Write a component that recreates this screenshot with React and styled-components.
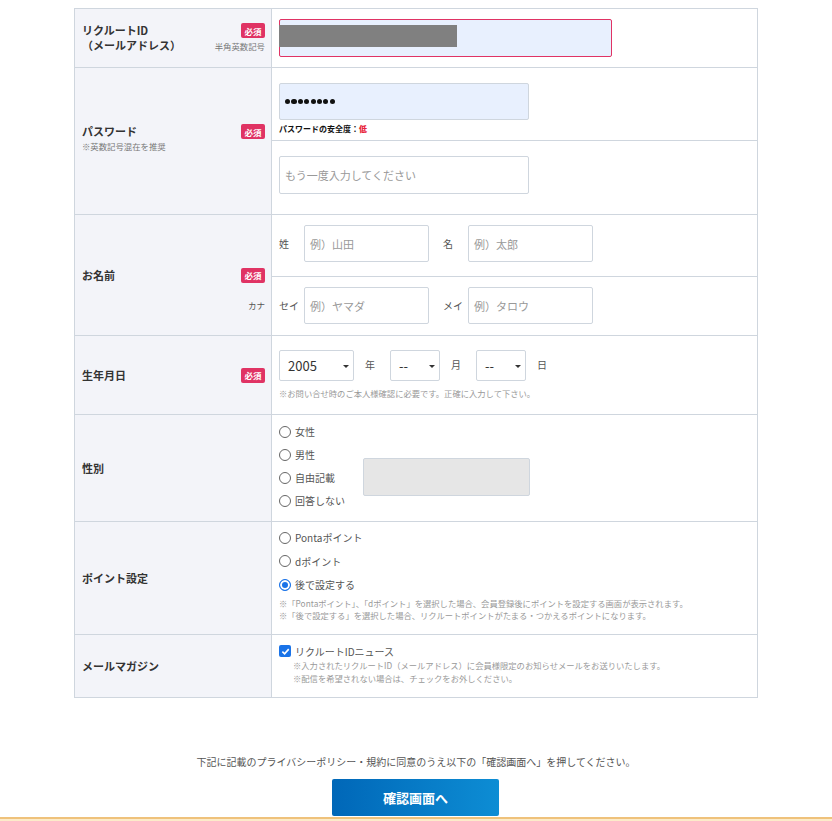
import React from "react";
import styled, { createGlobalStyle } from "styled-components";

const GlobalStyle = createGlobalStyle`
  body {
    margin: 0;
    background: #fff;
    font-family: "Noto Sans CJK JP", "Noto Sans", sans-serif;
    color: #333;
  }
`;

const Page = styled.div`
  padding-top: 8px;
`;

const Table = styled.div`
  width: 682px;
  margin-left: 74px;
  border: 1px solid #cfd6de;
  border-bottom: none;
`;

const Row = styled.div`
  display: grid;
  grid-template-columns: 197px 1fr;
  height: ${(p) => p.h}px;
  border-bottom: 1px solid #cfd6de;
`;

const LabelCell = styled.div`
  display: flex;
  align-items: center;
  padding: 0 6px ${(p) => p.pb || 0}px 7px;
  background: #f3f4f9;
  border-right: 1px solid #cfd6de;
`;

const LabelStack = styled.div`
  display: grid;
  grid-template-rows: 1fr auto 1fr;
  padding: 0 6px 0 7px;
  background: #f3f4f9;
  border-right: 1px solid #cfd6de;
`;

const LabelInner = styled.div`
  flex: 1;
  display: flex;
  justify-content: space-between;
  align-items: flex-start;
`;

const Title = styled.div`
  font-size: 11px;
  font-weight: bold;
  line-height: 15px;
  color: #333;
`;

const LabelNote = styled.div`
  font-size: 8.4px;
  line-height: 15px;
  color: #777;
`;

const Side = styled.div`
  display: flex;
  flex-direction: column;
  align-items: flex-end;
`;

const Badge = styled.span`
  display: inline-flex;
  align-items: center;
  justify-content: center;
  width: 24px;
  height: 15px;
  border-radius: 2px;
  background: #e03364;
  color: #fff;
  font-size: 8.5px;
  font-weight: bold;
`;

const SideNote = styled.div`
  margin-top: 2px;
  font-size: 8.4px;
  line-height: 12px;
  color: #777;
`;

const Kana = styled.div`
  align-self: center;
  justify-self: end;
  padding-bottom: 8px;
  font-size: 8.5px;
  color: #555;
`;

const FieldCell = styled.div`
  display: flex;
  flex-direction: column;
`;

const Sub = styled.div`
  height: ${(p) => p.h}px;
  padding: ${(p) => p.pt || 0}px 7px 0 7px;
  box-sizing: border-box;
  display: flex;
  flex-direction: column;
  justify-content: ${(p) => (p.center ? "center" : "flex-start")};
  & + & {
    border-top: 1px solid #cfd6de;
  }
`;

const TextBox = styled.div`
  box-sizing: border-box;
  width: ${(p) => p.w}px;
  height: ${(p) => p.ht || 38}px;
  border: 1px solid ${(p) => (p.error ? "#e03364" : "#cfd6de")};
  border-radius: 2px;
  background: ${(p) => p.bg || "#fff"};
  display: flex;
  align-items: center;
  padding-left: 5px;
  font-size: 11px;
  color: #999;
`;

const Redact = styled.span`
  align-self: flex-start;
  margin: 5px 0 0 -6px;
  width: 178px;
  height: 22px;
  background: #808080;
`;

const Dots = styled.span`
  display: flex;
  gap: 1.2px;
  & > i {
    width: 5.2px;
    height: 5.2px;
    border-radius: 50%;
    background: #111;
  }
`;

const Strength = styled.div`
  margin-top: 3px;
  font-size: 8px;
  font-weight: bold;
  line-height: 12px;
  color: #111;
  & b {
    color: #e8263c;
  }
`;

const Line = styled.div`
  display: flex;
  align-items: center;
`;

const UnitLabel = styled.span`
  width: ${(p) => p.w}px;
  font-size: ${(p) => p.fs || 11}px;
  color: #555;
  margin-left: ${(p) => p.ml || 0}px;
  margin-top: ${(p) => p.mt || 0}px;
`;

const SelectBox = styled.div`
  position: relative;
  box-sizing: border-box;
  width: ${(p) => p.w}px;
  height: 31px;
  border: 1px solid #cfd6de;
  border-radius: 2px;
  display: flex;
  align-items: center;
  padding-left: 8px;
  font-size: 13px;
  color: #333;
  &::after {
    content: "";
    position: absolute;
    right: 4px;
    top: 14px;
    border-left: 3px solid transparent;
    border-right: 3px solid transparent;
    border-top: 3.5px solid #333;
  }
`;

const Note = styled.div`
  font-size: 8.3px;
  line-height: ${(p) => p.lh || 12}px;
  color: #999;
  padding-left: ${(p) => p.pl || 0}px;
  margin-top: ${(p) => p.mt || 0}px;
  white-space: nowrap;
`;

const Choice = styled.label`
  display: flex;
  align-items: center;
  height: ${(p) => p.lh || 23}px;
  font-size: 10px;
  color: #555;
`;

const Radio = styled.span`
  box-sizing: border-box;
  width: 12px;
  height: 12px;
  margin-right: 4px;
  border-radius: 50%;
  border: 1px solid ${(p) => (p.on ? "#1a73e8" : "#666")};
  background: ${(p) => (p.on ? "#1a73e8" : "#fff")};
  box-shadow: ${(p) => (p.on ? "inset 0 0 0 2px #fff" : "none")};
`;

const Check = styled.span`
  display: inline-flex;
  align-items: center;
  justify-content: center;
  width: 12px;
  height: 12px;
  margin-right: 4px;
  border-radius: 2px;
  background: #1a73e8;
`;

const FreeBox = styled.span`
  box-sizing: border-box;
  width: 167px;
  height: 38px;
  margin: -8px 0 -7px 28px;
  border: 1px solid #cfd6de;
  border-radius: 2px;
  background: #e6e6e6;
`;

const Agree = styled.p`
  margin: 56px 0 0;
  text-align: center;
  font-size: 10px;
  line-height: 15px;
  color: #555;
`;

const Submit = styled.button`
  display: block;
  margin: 10px 0 0 332px;
  width: 167px;
  height: 37px;
  border: none;
  border-radius: 2px;
  background: linear-gradient(90deg, #0067b8 0%, #0d8dd4 100%);
  color: #fff;
  font-family: inherit;
  font-size: 13px;
  font-weight: bold;
`;

const Footer = styled.div`
  margin-top: 1px;
  height: 10px;
  border-top: 2px solid #efc27b;
  background: #fcebc9;
`;

const Required = ({ note }) => (
  <Side>
    <Badge>必須</Badge>
    {note && <SideNote>{note}</SideNote>}
  </Side>
);

const App = () => {
  return (
    <Page>
      <GlobalStyle />
      <Table>
        <Row h={58}>
          <LabelCell>
            <LabelInner>
              <div>
                <Title>リクルートID</Title>
                <Title>（メールアドレス）</Title>
              </div>
              <Required note="半角英数記号" />
            </LabelInner>
          </LabelCell>
          <FieldCell>
            <Sub h={58} center>
              <TextBox w={333} error bg="#e8f0fe">
                <Redact />
              </TextBox>
            </Sub>
          </FieldCell>
        </Row>

        <Row h={146}>
          <LabelCell pb={4}>
            <LabelInner>
              <div>
                <Title>パスワード</Title>
                <LabelNote>※英数記号混在を推奨</LabelNote>
              </div>
              <Required />
            </LabelInner>
          </LabelCell>
          <FieldCell>
            <Sub h={72} pt={15}>
              <TextBox w={250} ht={37} bg="#e8f0fe">
                <Dots>
                  {Array.from({ length: 8 }).map((_, i) => (
                    <i key={i} />
                  ))}
                </Dots>
              </TextBox>
              <Strength>
                パスワードの安全度：<b>低</b>
              </Strength>
            </Sub>
            <Sub h={74} pt={15}>
              <TextBox w={250}>もう一度入力してください</TextBox>
            </Sub>
          </FieldCell>
        </Row>

        <Row h={120}>
          <LabelStack>
            <span />
            <LabelInner>
              <Title>お名前</Title>
              <Required />
            </LabelInner>
            <Kana>カナ</Kana>
          </LabelStack>
          <FieldCell>
            <Sub h={61} pt={10}>
              <Line>
                <UnitLabel w={25} fs={10}>姓</UnitLabel>
                <TextBox w={125} ht={37}>例）山田</TextBox>
                <UnitLabel w={25} fs={10} ml={14}>名</UnitLabel>
                <TextBox w={125} ht={37}>例）太郎</TextBox>
              </Line>
            </Sub>
            <Sub h={59} pt={10}>
              <Line>
                <UnitLabel w={25} fs={10}>セイ</UnitLabel>
                <TextBox w={125} ht={37}>例）ヤマダ</TextBox>
                <UnitLabel w={25} fs={10} ml={14}>メイ</UnitLabel>
                <TextBox w={125} ht={37}>例）タロウ</TextBox>
              </Line>
            </Sub>
          </FieldCell>
        </Row>

        <Row h={78}>
          <LabelCell>
            <LabelInner>
              <Title>生年月日</Title>
              <Required />
            </LabelInner>
          </LabelCell>
          <FieldCell>
            <Sub h={78} pt={14}>
              <Line>
                <SelectBox w={75}>2005</SelectBox>
                <UnitLabel w={25} fs={10} ml={11} mt={-3}>年</UnitLabel>
                <SelectBox w={50}>--</SelectBox>
                <UnitLabel w={25} fs={10} ml={11} mt={-3}>月</UnitLabel>
                <SelectBox w={50}>--</SelectBox>
                <UnitLabel w={25} fs={10} ml={11} mt={-3}>日</UnitLabel>
              </Line>
              <Note mt={6}>※お問い合せ時のご本人様確認に必要です。正確に入力して下さい。</Note>
            </Sub>
          </FieldCell>
        </Row>

        <Row h={106}>
          <LabelCell>
            <Title>性別</Title>
          </LabelCell>
          <FieldCell>
            <Sub h={106} pt={5}>
              <Choice>
                <Radio />
                女性
              </Choice>
              <Choice>
                <Radio />
                男性
              </Choice>
              <Choice>
                <Radio />
                自由記載
                <FreeBox />
              </Choice>
              <Choice>
                <Radio />
                回答しない
              </Choice>
            </Sub>
          </FieldCell>
        </Row>

        <Row h={112}>
          <LabelCell>
            <Title>ポイント設定</Title>
          </LabelCell>
          <FieldCell>
            <Sub h={112} pt={4}>
              <Choice lh={23.5}>
                <Radio />
                Pontaポイント
              </Choice>
              <Choice lh={23.5}>
                <Radio />
                dポイント
              </Choice>
              <Choice lh={23.5}>
                <Radio on />
                後で設定する
              </Choice>
              <Note>
                ※「Pontaポイント」、「dポイント」を選択した場合、会員登録後にポイントを設定する画面が表示されます。
              </Note>
              <Note>
                ※「後で設定する」を選択した場合、リクルートポイントがたまる・つかえるポイントになります。
              </Note>
            </Sub>
          </FieldCell>
        </Row>

        <Row h={62}>
          <LabelCell>
            <Title>メールマガジン</Title>
          </LabelCell>
          <FieldCell>
            <Sub h={62} pt={8}>
              <Choice lh={16}>
                <Check>
                  <svg width="9" height="9" viewBox="0 0 10 10">
                    <path
                      d="M1.5 5.2 L4 7.6 L8.6 2.4"
                      fill="none"
                      stroke="#fff"
                      strokeWidth="1.8"
                    />
                  </svg>
                </Check>
                リクルートIDニュース
              </Choice>
              <Note lh={13} pl={14}>
                ※入力されたリクルートID（メールアドレス）に会員様限定のお知らせメールをお送りいたします。
              </Note>
              <Note lh={13} pl={14}>
                ※配信を希望されない場合は、チェックをお外しください。
              </Note>
            </Sub>
          </FieldCell>
        </Row>
      </Table>

      <Agree>
        下記に記載のプライバシーポリシー・規約に同意のうえ以下の「確認画面へ」を押してください。
      </Agree>
      <Submit>確認画面へ</Submit>
      <Footer />
    </Page>
  );
};

export default App;
